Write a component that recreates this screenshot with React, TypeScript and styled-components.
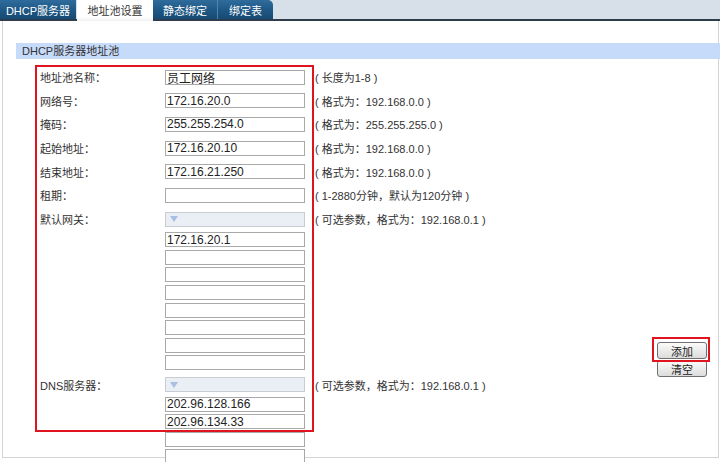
import React from "react";
import styled, { createGlobalStyle } from "styled-components";

const GlobalStyle = createGlobalStyle`
  html, body {
    margin: 0;
    padding: 0;
    background: #fff;
  }
  body {
    width: 720px;
    height: 462px;
    overflow: hidden;
    font-family: "Liberation Sans", "Noto Sans CJK SC", sans-serif;
    font-size: 11px;
    color: #333;
  }
  * {
    box-sizing: border-box;
  }
`;

const Page = styled.div`
  position: relative;
  width: 720px;
  height: 462px;
`;

const TabBar = styled.div`
  display: flex;
  height: 21px;
  background: #d7dfe8;
  border-bottom: 2px solid #2e3d4c;
`;

const Tab = styled.div<{ $active?: boolean; $w: number; $last?: boolean }>`
  width: ${(p) => p.$w}px;
  height: ${(p) => (p.$active ? 21 : 19)}px;
  margin-left: ${(p) => (p.$active ? 1 : 0)}px;
  display: flex;
  align-items: center;
  justify-content: center;
  font-size: 11px;
  color: ${(p) => (p.$active ? "#333" : "#fff")};
  background: ${(p) =>
    p.$active
      ? "linear-gradient(#ffffff 0%, #ffffff 80%, #eef0f2 100%)"
      : "linear-gradient(#2f6c9c 0%, #1e5784 55%, #164a74 100%)"};
  border-left: ${(p) => (p.$last ? "1px solid #4a86b8" : "none")};
  border-top-right-radius: ${(p) => (p.$last ? 5 : 0)}px;
  padding-bottom: ${(p) => (p.$active ? 2 : 0)}px;
`;

const Panel = styled.div`
  margin: 0 1px 0 2px;
  height: 437px;
  border: 1px solid #d4d4d4;
  border-top: none;
  padding-top: 22px;
`;

const SectionHeader = styled.div`
  margin-left: 13px;
  margin-right: -2px;
  height: 16px;
  line-height: 16px;
  padding-left: 6px;
  background: #c6dafa;
  color: #333;
`;

const Form = styled.div`
  display: flex;
  flex-direction: column;
  margin-top: 10px;
  padding-left: 37px;
`;

const Row = styled.div<{ $after?: number }>`
  display: grid;
  grid-template-columns: 125px 140px auto;
  align-items: center;
  height: 15px;
  margin-bottom: ${(p) => p.$after ?? 8.7}px;
`;

const Label = styled.span`
  color: #333;
  white-space: nowrap;
`;

const Hint = styled.span`
  margin-left: 10px;
  color: #333;
  white-space: nowrap;
`;

const TextBox = styled.input`
  width: 140px;
  height: 15px;
  margin: 0;
  padding: 0 1px;
  border: 1px solid #a9a9a9;
  background: #fff;
  font-family: "Liberation Sans", "Noto Sans CJK SC", sans-serif;
  font-size: 12px;
  color: #222;
  outline: none;
`;

const SelectBox = styled.div`
  width: 140px;
  height: 15px;
  border: 1px solid #c9ccd2;
  background: #eaeef5;
  display: flex;
  align-items: center;
  padding-left: 4px;
`;

const Group = styled.div<{ $after?: number }>`
  display: flex;
  margin-bottom: ${(p) => p.$after ?? 0}px;
`;

const GroupMain = styled.div`
  display: flex;
  flex-direction: column;
`;

const List = styled.div<{ $top: number }>`
  display: flex;
  flex-direction: column;
  gap: 2.6px;
  margin-top: ${(p) => p.$top}px;
  margin-left: 125px;
`;

const Actions = styled.div`
  margin-left: auto;
  margin-right: 11px;
  margin-bottom: -6.3px;
  align-self: flex-end;
  display: flex;
  flex-direction: column;
  gap: 1px;
`;

const Marked = styled.div`
  position: relative;
  display: flex;

  &::after {
    content: "";
    position: absolute;
    left: -5px;
    top: -5px;
    right: -3px;
    bottom: -3px;
    border: 2px solid #e0141e;
    pointer-events: none;
  }
`;

const Button = styled.button`
  width: 50px;
  height: 17px;
  padding: 0;
  border: 1px solid #6f6f6f;
  border-radius: 3px;
  background: linear-gradient(#fbfbfb, #dcdcdc);
  font-family: "Liberation Sans", "Noto Sans CJK SC", sans-serif;
  font-size: 11px;
  color: #222;
`;

const Highlight = styled.div`
  position: absolute;
  left: 35px;
  top: 65px;
  width: 279px;
  height: 367px;
  border: 2px solid #e0141e;
  pointer-events: none;
`;

const Arrow = () => (
  <svg width="8" height="6" viewBox="0 0 8 6">
    <polygon points="0,0 8,0 4,6" fill="#a8bfe2" />
  </svg>
);

const fields = [
  { label: "地址池名称：", value: "员工网络", hint: "( 长度为1-8 )" },
  { label: "网络号：", value: "172.16.20.0", hint: "( 格式为：192.168.0.0 )" },
  { label: "掩码：", value: "255.255.254.0", hint: "( 格式为：255.255.255.0 )" },
  { label: "起始地址：", value: "172.16.20.10", hint: "( 格式为：192.168.0.0 )" },
  { label: "结束地址：", value: "172.16.21.250", hint: "( 格式为：192.168.0.0 )" },
  { label: "租期：", value: "", hint: "( 1-2880分钟，默认为120分钟 )" },
];

const gateways = ["172.16.20.1", "", "", "", "", "", "", ""];
const dnsServers = ["202.96.128.166", "202.96.134.33", "", ""];

const App = () => {
  return (
    <Page>
      <GlobalStyle />
      <TabBar>
        <Tab $w={76}>DHCP服务器</Tab>
        <Tab $w={76} $active>
          地址池设置
        </Tab>
        <Tab $w={64}>静态绑定</Tab>
        <Tab $w={56} $last>
          绑定表
        </Tab>
      </TabBar>
      <Panel>
        <SectionHeader>DHCP服务器地址池</SectionHeader>
        <Form>
          {fields.map((f) => (
            <Row key={f.label}>
              <Label>{f.label}</Label>
              <TextBox readOnly value={f.value} />
              <Hint>{f.hint}</Hint>
            </Row>
          ))}
          <Group $after={6.3}>
            <GroupMain>
              <Row $after={0}>
                <Label>默认网关：</Label>
                <SelectBox>
                  <Arrow />
                </SelectBox>
                <Hint>( 可选参数，格式为：192.168.0.1 )</Hint>
              </Row>
              <List $top={6}>
                {gateways.map((g, i) => (
                  <TextBox key={i} readOnly value={g} />
                ))}
              </List>
            </GroupMain>
            <Actions>
              <Marked>
                <Button>添加</Button>
              </Marked>
              <Button>清空</Button>
            </Actions>
          </Group>
          <Group>
            <GroupMain>
              <Row $after={0}>
                <Label>DNS服务器：</Label>
                <SelectBox>
                  <Arrow />
                </SelectBox>
                <Hint>( 可选参数，格式为：192.168.0.1 )</Hint>
              </Row>
              <List $top={5}>
                {dnsServers.map((d, i) => (
                  <TextBox key={i} readOnly value={d} />
                ))}
              </List>
            </GroupMain>
          </Group>
        </Form>
      </Panel>
      <Highlight />
    </Page>
  );
};

export default App;
